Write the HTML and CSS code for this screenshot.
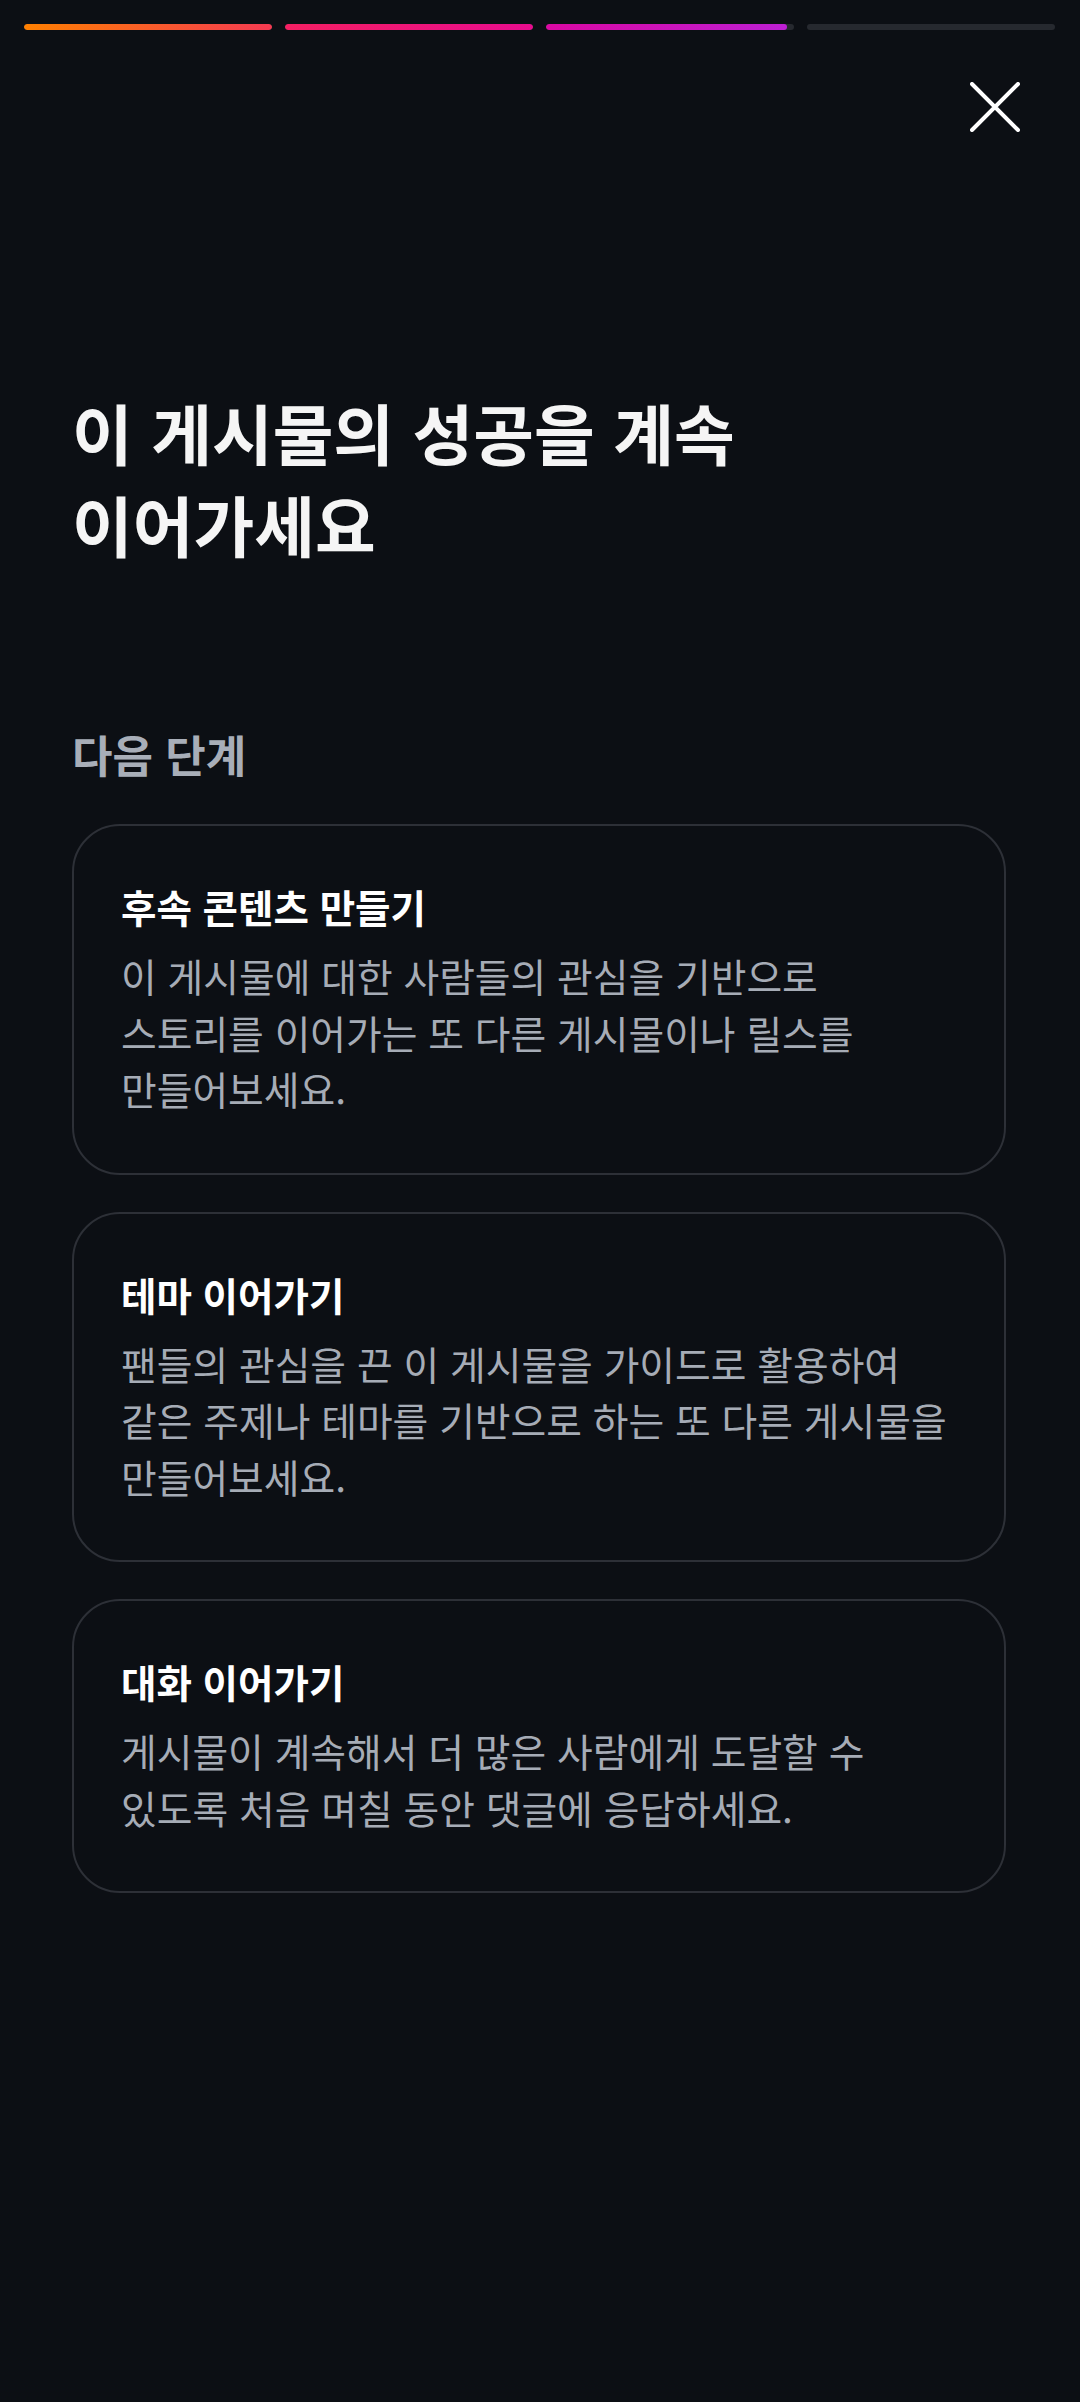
FILE: index.html
```html
<!DOCTYPE html>
<html lang="ko">
<head>
	<meta charset="UTF-8">
	<title>다음 단계</title>
	<link rel="stylesheet" href="styles.css">
</head>
<body>
	<div class="screen">
		<div class="progress">
			<div class="seg"><div class="fill fill-1"></div></div>
			<div class="seg"><div class="fill fill-2"></div></div>
			<div class="seg"><div class="fill fill-3"></div></div>
			<div class="seg"></div>
		</div>
		<div class="topbar">
			<button class="close" aria-label="닫기">
				<svg width="50" height="50" viewBox="0 0 50 50">
					<path d="M2 2 L48 48 M48 2 L2 48" stroke="#fff" stroke-width="4" stroke-linecap="round" fill="none"/>
				</svg>
			</button>
		</div>
		<main class="content">
			<h1 class="headline">이 게시물의 성공을 계속<br>이어가세요</h1>
			<h2 class="section-title">다음 단계</h2>
			<div class="cards">
				<div class="card">
					<div class="card-title">후속 콘텐츠 만들기</div>
					<p class="card-text">이 게시물에 대한 사람들의 관심을 기반으로<br>스토리를 이어가는 또 다른 게시물이나 릴스를<br>만들어보세요.</p>
				</div>
				<div class="card">
					<div class="card-title">테마 이어가기</div>
					<p class="card-text">팬들의 관심을 끈 이 게시물을 가이드로 활용하여<br>같은 주제나 테마를 기반으로 하는 또 다른 게시물을<br>만들어보세요.</p>
				</div>
				<div class="card">
					<div class="card-title">대화 이어가기</div>
					<p class="card-text">게시물이 계속해서 더 많은 사람에게 도달할 수<br>있도록 처음 며칠 동안 댓글에 응답하세요.</p>
				</div>
			</div>
		</main>
	</div>
</body>
</html>
```

FILE: styles.css
```css
body{
	margin:0;
	background:#0c0f14;
	font-family:"Noto Sans CJK KR","Noto Sans",sans-serif;
	color:#fff;
}
.screen{
	width:1080px;
	min-height:2402px;
	background:#0c0f14;
}
.progress{
	display:flex;
	gap:13px;
	padding:24px 25px 0 24px;
}
.seg{
	flex:1;
	height:6px;
	border-radius:3px;
	background:#26292f;
	overflow:hidden;
}
.fill{
	height:100%;
	border-radius:3px;
}
.fill-1{
	width:100%;
	background:linear-gradient(90deg,#ff8000,#f53a52);
}
.fill-2{
	width:100%;
	background:linear-gradient(90deg,#f51f62,#e80c8e);
}
.fill-3{
	width:97%;
	background:linear-gradient(90deg,#db08a2,#bd1fd3);
}
.topbar{
	display:flex;
	justify-content:flex-end;
	padding:52px 60px 0 0;
}
.close{
	border:0;
	padding:0;
	background:none;
	width:50px;
	height:50px;
	display:block;
}
.close svg{
	display:block;
}
.content{
	padding:0 74px 0 72px;
}
.headline{
	margin:253px 0 0;
	font-size:66px;
	line-height:92px;
	font-weight:700;
	color:#f5f5f5;
}
.section-title{
	margin:155px 0 0;
	font-size:44px;
	line-height:60px;
	font-weight:700;
	color:#a8aeb8;
}
.cards{
	display:flex;
	flex-direction:column;
	gap:37px;
	margin-top:40px;
}
.card{
	border:2px solid #2d3037;
	border-radius:48px;
	padding:55px 40px 56px 47px;
}
.card-title{
	font-size:38.5px;
	line-height:50px;
	font-weight:700;
	color:#fff;
}
.card-text{
	margin:16px 0 0;
	font-size:38.8px;
	line-height:56.5px;
	color:#a6acb6;
	white-space:nowrap;
}
```
